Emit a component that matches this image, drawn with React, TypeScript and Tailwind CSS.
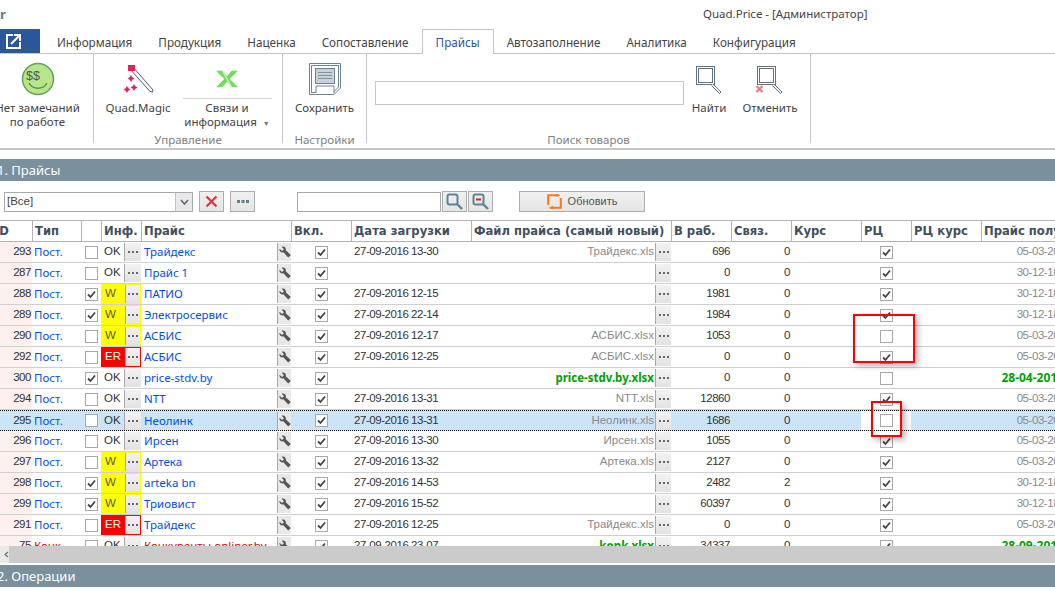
import React from "react";

type Row = {
  id: number;
  pick?: boolean;
  inf: "OK" | "W" | "ER";
  name: string;
  date?: string;
  file?: string;
  work: number;
  links?: number;
  rc?: boolean;
  got: string;
  kind?: "konk" | "sel";
  fileGreen?: boolean;
  gotGreen?: boolean;
};

const rows: Row[] = [
  { id: 293, inf: "OK", name: "Трайдекс", date: "27-09-2016 13-30", file: "Трайдекс.xls", work: 696, rc: true, got: "05-03-2016" },
  { id: 287, inf: "OK", name: "Прайс 1", work: 0, rc: true, got: "30-12-1899" },
  { id: 288, pick: true, inf: "W", name: "ПАТИО", date: "27-09-2016 12-15", work: 1981, rc: true, got: "30-12-1899" },
  { id: 289, pick: true, inf: "W", name: "Электросервис", date: "27-09-2016 22-14", work: 1984, rc: true, got: "30-12-1899" },
  { id: 290, inf: "W", name: "АСБИС", date: "27-09-2016 12-17", file: "АСБИС.xlsx", work: 1053, got: "05-03-2016" },
  { id: 292, inf: "ER", name: "АСБИС", date: "27-09-2016 12-25", file: "АСБИС.xlsx", work: 0, rc: true, got: "05-03-2016" },
  { id: 300, pick: true, inf: "OK", name: "price-stdv.by", file: "price-stdv.by.xlsx", fileGreen: true, work: 0, got: "28-04-2016", gotGreen: true },
  { id: 294, inf: "OK", name: "NTT", date: "27-09-2016 13-31", file: "NTT.xls", work: 12860, rc: true, got: "05-03-2016" },
  { id: 295, inf: "OK", name: "Неолинк", date: "27-09-2016 13-31", file: "Неолинк.xls", work: 1686, got: "05-03-2016", kind: "sel" },
  { id: 296, inf: "OK", name: "Ирсен", date: "27-09-2016 13-30", file: "Ирсен.xls", work: 1055, rc: true, got: "05-03-2016" },
  { id: 297, inf: "W", name: "Артека", date: "27-09-2016 13-32", file: "Артека.xls", work: 2127, rc: true, got: "05-03-2016" },
  { id: 298, pick: true, inf: "W", name: "arteka bn", date: "27-09-2016 14-53", work: 2482, links: 2, rc: true, got: "30-12-1899" },
  { id: 299, pick: true, inf: "W", name: "Триовист", date: "27-09-2016 15-52", work: 60397, rc: true, got: "30-12-1899" },
  { id: 291, inf: "ER", name: "Трайдекс", date: "27-09-2016 12-25", file: "Трайдекс.xls", work: 0, rc: true, got: "05-03-2016" },
  { id: 75, inf: "OK", name: "Конкуренты onliner.by", date: "27-09-2016 23-07", file: "konk.xlsx", fileGreen: true, work: 34337, rc: true, got: "28-09-2016", gotGreen: true, kind: "konk" },
];

const tabs = ["Информация", "Продукция", "Наценка", "Сопоставление", "Прайсы", "Автозаполнение", "Аналитика", "Конфигурация"];

// narrow digits, close to what the old grid font gives
const num = "font-['Liberation_Sans',sans-serif] text-[11.5px] tracking-[-0.45px]";

const Check = ({ on, white, blue }: { on?: boolean; white?: boolean; blue?: boolean }) => (
  <span className={`relative block h-[13px] w-[13px] border border-[#a8a8a8] ${white ? "bg-white" : ""} ${blue ? "bg-[#cce4f7]" : ""}`}>
    {on && (
      <svg viewBox="0 0 13 13" className="absolute left-[-1px] top-[-1px] h-[13px] w-[13px]">
        <path d="M3 6.500 L5.500 9 L10 3.500" fill="none" stroke="#444" strokeWidth="1.800" />
      </svg>
    )}
  </span>
);

const Dots = ({ w }: { w: string }) => (
  <span className={`flex h-[18px] items-center justify-center border-l border-[#a8a8a8] bg-gradient-to-b from-[#f2f2f2] to-[#e2e2e2] ${w}`}>
    <svg width="10" height="2" viewBox="0 0 10 2" fill="#666">
      <rect x="0" width="2" height="2" />
      <rect x="4" width="2" height="2" />
      <rect x="8" width="2" height="2" />
    </svg>
  </span>
);

const Wrench = () => (
  <span className="flex h-[18px] w-[14px] items-center justify-center border-l border-[#a8a8a8] bg-[#e8e8e8]">
    <svg width="12" height="12" viewBox="0 0 11 11">
      <path d="M0.500 2.500 L2.800 4.500 L4.500 3 L2.500 0.600 C4.800 -0.300 6.800 1.500 6.200 3.800 L10.800 8.300 L8.500 10.500 L4 5.800 C2 6.400 0 4.800 0.500 2.500Z" fill="#555" />
    </svg>
  </span>
);

const Magnifier = ({ cancel }: { cancel?: boolean }) => (
  <svg width="30" height="30" viewBox="0 0 30 30">
    <rect x="2.500" y="1.500" width="18" height="18" fill="#fff" stroke="#5d7480" strokeWidth="1" />
    <rect x="4.500" y="3.500" width="14" height="14" fill="none" stroke="#5d7480" strokeWidth="1" />
    <path d="M19 19 L27 27 L25.500 28.500 L17.500 20.500" fill="#fff" stroke="#5d7480" strokeWidth="1" />
    {cancel && <path d="M1.500 21 L7.500 27 M7.500 21 L1.500 27" stroke="#e57f8b" strokeWidth="2.400" />}
  </svg>
);

const Lens = ({ minus }: { minus?: boolean }) => (
  <svg width="17" height="17" viewBox="0 0 17 17" fill="none" stroke="#5c8494">
    <rect x="1.500" y="1.500" width="10" height="10" rx="2" strokeWidth="2" />
    <path d="M10.500 10.500 L16 16" strokeWidth="2.400" />
    {minus && <path d="M4 6.500 H9" stroke="#c8202f" strokeWidth="2" />}
  </svg>
);

const Cell = ({ w, className, children }: { w: string; className?: string; children?: React.ReactNode }) => (
  <div className={`flex h-full shrink-0 items-center overflow-hidden whitespace-nowrap ${w} ${className ?? ""}`}>{children}</div>
);

const Head = ({ w, children }: { w: string; children?: React.ReactNode }) => (
  <div className={`flex h-full shrink-0 items-center overflow-hidden whitespace-nowrap border-r border-[#b4b4b4] pl-[2px] pt-[2px] ${w}`}>{children}</div>
);

const GridRow = ({ r }: { r: Row }) => {
  const sel = r.kind === "sel";
  const konk = r.kind === "konk";
  const linkColor = konk ? "text-[#e00000]" : "text-[#0050e6]";
  const infBg =
    r.inf === "W" ? "bg-[#ffff00] text-[#555]" : r.inf === "ER" ? "bg-[#ff0000] text-white" : "text-[#333]";
  const infBorder = r.inf === "W" ? "border border-[#ffff00]" : r.inf === "ER" ? "border border-[#ff0000]" : "";
  return (
    <div
      className={`flex h-[21px] text-[11.5px] text-[#333] ${
        sel ? "border-y border-dotted border-black bg-[#cce4f7]" : "border-b border-[#d0d0d0]"
      }`}
    >
      <Cell w="w-[32px]" className={`justify-end pr-[1px] ${num} ${sel ? "" : "bg-[#fdf0ee]"}`}>{r.id}</Cell>
      <Cell w="w-[49px]" className={`pl-[2px] ${linkColor}`}>{konk ? "Конк." : "Пост."}</Cell>
      <Cell w="w-[20px]" className="pl-[4px]"><Check on={r.pick} white={sel} /></Cell>
      <Cell w="w-[40px]" className={infBorder}>
        <span className={`flex h-full w-[23px] items-center pl-[3px] font-['Liberation_Sans',sans-serif] text-[11.5px] ${infBg}`}>{r.inf}</span>
        <Dots w="flex-1" />
      </Cell>
      <Cell w="w-[136px]" className={`pl-[3px] ${linkColor}`}>{r.name}</Cell>
      <Cell w="w-[14px]"><Wrench /></Cell>
      <Cell w="w-[60px]" className="justify-center"><Check on white={sel} /></Cell>
      <Cell w="w-[120px]" className={`pl-[3px] ${num}`}>{r.date}</Cell>
      <Cell w="w-[184px]" className={`justify-end pr-[1px] ${r.fileGreen ? "font-bold text-[#00a000]" : "font-['Liberation_Sans',sans-serif] text-[#8a8a8a]"}`}>{r.file}</Cell>
      <Cell w="w-[16px]"><Dots w="w-[16px]" /></Cell>
      <Cell w="w-[60px]" className={`justify-end pr-[1px] ${num}`}>{r.work}</Cell>
      <Cell w="w-[60px]" className={`justify-end pr-[1px] ${num}`}>{r.links ?? 0}</Cell>
      <Cell w="w-[70px]" />
      <Cell w="w-[50px]" className="justify-center bg-white"><Check on={r.rc} white blue={konk} /></Cell>
      <Cell w="w-[70px]" />
      <Cell w="w-[90px]" className={`justify-end ${r.gotGreen ? "pr-[7px] text-[12px] font-bold text-[#00a000]" : `${num} text-[#8a8a8a]`}`}>{r.got}</Cell>
    </div>
  );
};

const Section = ({ title }: { title: string }) => (
  <div className="flex h-[22px] shrink-0 items-center bg-[#7a909c] pt-[2px] text-[13px] text-white">
    <span className="ml-[-3px]">{title}</span>
  </div>
);

const ToolBtn = ({ w, children }: { w: string; children?: React.ReactNode }) => (
  <div className={`flex h-[21px] items-center justify-center border border-[#adadad] bg-gradient-to-b from-[#f0f0f0] to-[#e5e5e5] ${w}`}>{children}</div>
);

const GroupLabel = ({ children }: { children: React.ReactNode }) => (
  <div className="absolute bottom-[-5px] left-0 right-0 text-center text-[11.5px] leading-[16px] text-[#808080]">{children}</div>
);

export default function App() {
  return (
    <div className="relative flex h-[591px] w-[1055px] flex-col overflow-hidden bg-white font-['Noto_Sans',sans-serif] text-[#444]">
      {/* title */}
      <div className="relative h-[29px] shrink-0">
        <span className="absolute left-0 top-[5px] text-[13px] font-bold text-[#5a7a94]">r</span>
        <span className="absolute left-[703px] top-[5px] text-[11.5px] text-[#444]">Quad.Price - [Администратор]</span>
      </div>

      {/* tabs */}
      <div className="flex h-[25px] shrink-0 border-b border-[#c6c6c6] text-[11.7px]">
        <div className="flex h-[24px] w-[40px] items-center justify-center bg-[#2b579a] pr-[13px]">
          <svg width="18" height="18" viewBox="0 0 18 18" fill="none" stroke="#fff" strokeWidth="2">
            <path d="M8 3 H2 V16 H15 V10" />
            <path d="M6 12 L14 4 M9 3 H15 V9" />
          </svg>
        </div>
        <div className="ml-[4px] flex">
          {tabs.map((t) =>
            t === "Прайсы" ? (
              <div key={t} className="relative z-10 flex h-[25px] items-center border border-b-0 border-[#c6c6c6] bg-white px-[13px] pt-[2px] text-[#2b579a]">
                {t}
              </div>
            ) : (
              <div key={t} className="flex h-[24px] items-center px-[13px] pt-[3px] text-[#444]">
                {t}
              </div>
            )
          )}
        </div>
      </div>

      {/* ribbon */}
      <div className="flex h-[96px] shrink-0 border-b-2 border-[#c6c6c6] text-[11.5px] leading-[14px] text-[#444]">
        <div className="relative flex h-[89px] w-[94px] shrink-0 flex-col items-center border-r border-[#c6c6c6] pr-[18px]">
          <svg width="34" height="34" viewBox="0 0 34 34" className="mt-[8px] shrink-0">
            <circle cx="17" cy="17" r="15.500" fill="#b9e58a" stroke="#5fa25a" strokeWidth="1.500" />
            <text x="5" y="18" fontSize="12.500" fontFamily="Liberation Sans" fill="#466050">$$</text>
            <path d="M8 21 C12 28 22 28 26 21" fill="none" stroke="#4f8d5a" strokeWidth="1.400" />
          </svg>
          <div className="mt-[5px] w-[110px] shrink-0 text-center">Нет замечаний<br />по работе</div>
        </div>

        <div className="relative flex h-[89px] w-[189px] shrink-0 border-r border-[#c6c6c6]">
          <div className="flex w-[88px] flex-col items-center">
            <svg width="34" height="34" viewBox="0 0 34 34" className="mt-[8px] shrink-0">
              <path d="M12 5 L32 28 L31.500 30 L29 29.500 L9 7Z" fill="#fff" stroke="#4d5f69" strokeWidth="1" />
              <rect x="7" y="3" width="7" height="6" fill="#e0245e" />
              <path d="M10 13 l1.300 2.200 l2.200 1.300 l-2.200 1.300 l-1.300 2.200 l-1.300 -2.200 l-2.200 -1.300 l2.200 -1.300Z M13 22 l1.300 2.200 l2.200 1.300 l-2.200 1.300 l-1.300 2.200 l-1.300 -2.200 l-2.200 -1.300 l2.200 -1.300Z M6 24 l1.300 2.200 l2.200 1.300 l-2.200 1.300 l-1.300 2.200 l-1.300 -2.200 l-2.200 -1.300 l2.200 -1.300Z" fill="#e0245e" />
            </svg>
            <div className="mt-[5px]">Quad.Magic</div>
          </div>
          <div className="flex w-[90px] flex-col items-center">
            <svg width="26" height="20" viewBox="0 0 26 22" className="mt-[15px] shrink-0">
              <path d="M1 2 H8 L13 8 L18 2 H25 L16 11 L25 20 H18 L13 14 L8 20 H1 L10 11Z" fill="#6fdc5c" />
              <path d="M8 2 L18 20" stroke="#c8f2bd" strokeWidth="1.500" />
            </svg>
            <div className="mt-[9px] w-[89px] border-t border-[#d4d4d4] pt-[2px] text-center leading-[14px]">
              Связи и<br />информация <span className="ml-[3px] text-[7px] text-[#777]">▼</span>
            </div>
          </div>
          <GroupLabel>Управление</GroupLabel>
        </div>

        <div className="relative flex h-[89px] w-[84px] shrink-0 flex-col items-center border-r border-[#c6c6c6]">
          <svg width="34" height="34" viewBox="0 0 34 34" className="mt-[8px] shrink-0">
            <path d="M1.500 1.500 H32.500 V26 L26 32.500 H1.500Z" fill="#fff" stroke="#6b8490" />
            <path d="M3.500 3.500 H30.500 V25 L25 30.500 H3.500Z" fill="none" stroke="#6b8490" />
            <rect x="7.500" y="6.500" width="19" height="15" fill="#c6d2d8" stroke="#6b8490" />
            <path d="M10 10.500 H24 M10 13.500 H24 M10 16.500 H24" stroke="#7f949e" />
            <path d="M8 31 V24 H26 V31" fill="#fff" stroke="#6b8490" />
          </svg>
          <div className="mt-[5px]">Сохранить</div>
          <GroupLabel>Настройки</GroupLabel>
        </div>

        <div className="relative flex h-[89px] w-[444px] shrink-0 border-r border-[#c6c6c6]">
          <div className="ml-[8px] mt-[27px] h-[24px] w-[309px] border border-[#c6c6c6]" />
          <div className="ml-[7px] flex w-[36px] flex-col items-center">
            <div className="mt-[11px] h-[30px]"><Magnifier /></div>
            <div className="mt-[6px]">Найти</div>
          </div>
          <div className="ml-[8px] flex w-[70px] flex-col items-center">
            <div className="mt-[11px] h-[30px]"><Magnifier cancel /></div>
            <div className="mt-[6px]">Отменить</div>
          </div>
          <GroupLabel>Поиск товаров</GroupLabel>
        </div>
      </div>

      <div className="h-[9px] shrink-0" />
      <Section title="1. Прайсы" />

      {/* filter bar */}
      <div className="flex h-[39px] shrink-0 items-center pl-[4px] pt-[2px] font-['Liberation_Sans',sans-serif] text-[11.5px]">
        <div className="flex h-[20px] w-[189px] items-center justify-between border border-[#a9a9a9] pl-[2px]">
          <span>[Все]</span>
          <span className="flex h-full w-[17px] items-center justify-center border-l border-[#c0c0c0] bg-[#e8e8e8]">
            <svg width="9" height="6" viewBox="0 0 9 6"><path d="M1 1 L4.500 5 L8 1" fill="none" stroke="#667" strokeWidth="1.600" /></svg>
          </span>
        </div>
        <div className="ml-[6px]">
          <ToolBtn w="w-[25px]">
            <svg width="13" height="13" viewBox="0 0 13 13"><path d="M1.500 1.500 L11.500 11.500 M11.500 1.500 L1.500 11.500" stroke="#e2343e" strokeWidth="2.200" /></svg>
          </ToolBtn>
        </div>
        <div className="ml-[6px]">
          <ToolBtn w="w-[25px]">
            <svg width="12" height="3" viewBox="0 0 12 3" fill="#60808f"><rect width="3" height="3" /><rect x="4.500" width="3" height="3" /><rect x="9" width="3" height="3" /></svg>
          </ToolBtn>
        </div>
        <div className="ml-[42px] h-[20px] w-[144px] border border-[#a9a9a9]" />
        <div className="ml-[1px]">
          <ToolBtn w="w-[25px]"><Lens /></ToolBtn>
        </div>
        <div className="ml-[1px]">
          <ToolBtn w="w-[25px]"><Lens minus /></ToolBtn>
        </div>
        <div className="ml-[26px]">
          <ToolBtn w="w-[126px]">
            <svg width="15" height="15" viewBox="0 0 15 15" fill="none" stroke="#ef7d1a" className="mr-[6px]">
              <path d="M1.200 11 V1.200 H10" strokeWidth="2" />
              <path d="M13.800 4 V13.800 H5" strokeWidth="2" />
              <path d="M9.500 0 L12.500 1.200 L9.500 2.500Z M5.500 12.500 L2.500 13.800 L5.500 15Z" fill="#ef7d1a" strokeWidth="1" />
            </svg>
            <span className="text-[11px] text-[#555]">Обновить</span>
          </ToolBtn>
        </div>
      </div>

      {/* grid */}
      <div className="h-[326px] shrink-0 overflow-hidden">
        <div className="flex h-[22px] border-y border-[#b4b4b4] font-['DejaVu_Sans',sans-serif] text-[11.6px] font-bold text-[#42505c]">
          <Head w="w-[33px]"><span className="ml-[-7px]">ID</span></Head>
          <Head w="w-[49px]">Тип</Head>
          <Head w="w-[20px]" />
          <Head w="w-[40px]">Инф.</Head>
          <Head w="w-[150px]">Прайс</Head>
          <Head w="w-[60px]">Вкл.</Head>
          <Head w="w-[120px]">Дата загрузки</Head>
          <Head w="w-[200px]">Файл прайса (самый новый)</Head>
          <Head w="w-[60px]">В раб.</Head>
          <Head w="w-[60px]">Связ.</Head>
          <Head w="w-[70px]">Курс</Head>
          <Head w="w-[50px]">РЦ</Head>
          <Head w="w-[70px]">РЦ курс</Head>
          <div className="flex h-full items-center whitespace-nowrap pl-[2px] pt-[2px]">Прайс получен</div>
        </div>
        {rows.map((r) => (
          <GridRow key={r.id} r={r} />
        ))}
      </div>

      {/* scrollbar */}
      <div className="flex h-[17px] shrink-0 items-center bg-[#cbcbcb]">
        <span className="flex h-full w-[9px] items-center justify-end bg-[#e8e8e8]">
          <svg width="5" height="7" viewBox="0 0 5 7"><path d="M4 1 L1 3.500 L4 6" fill="none" stroke="#777" strokeWidth="1.400" /></svg>
        </span>
      </div>
      <div className="h-[2px] shrink-0" />
      <Section title="2. Операции" />

      {/* annotations drawn on top of the screenshot */}
      <div className="absolute left-[853px] top-[314px] h-[49px] w-[62px] border-[2px] border-[#ff0000] shadow-[3px_3px_6px_rgba(0,0,0,0.3)]" />
      <div className="absolute left-[871px] top-[401px] h-[36px] w-[31px] border-[2px] border-[#ff0000] shadow-[3px_3px_6px_rgba(0,0,0,0.3)]" />
    </div>
  );
}
